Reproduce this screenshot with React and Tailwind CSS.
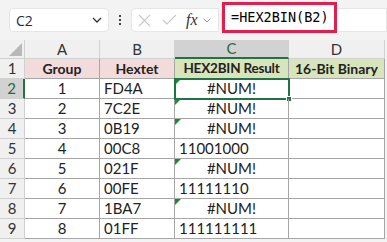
import React from "react";

const rows = [
  { n: 1, g: "1", h: "FD4A", r: "#NUM!", err: true },
  { n: 2, g: "2", h: "7C2E", r: "#NUM!", err: true },
  { n: 3, g: "3", h: "0B19", r: "#NUM!", err: true },
  { n: 4, g: "4", h: "00C8", r: "11001000", err: false },
  { n: 5, g: "5", h: "021F", r: "#NUM!", err: true },
  { n: 6, g: "6", h: "00FE", r: "11111110", err: false },
  { n: 7, g: "7", h: "1BA7", r: "#NUM!", err: true },
  { n: 8, g: "8", h: "01FF", r: "111111111", err: false },
];

const cellFont = { fontFamily: "Lato, 'Open Sans', sans-serif" };

function Triangle() {
  return (
    <svg className="absolute left-0 top-0" width="6" height="6" viewBox="0 0 6 6">
      <polygon points="0,0 6,0 0,6" fill="#1e8a2e" />
    </svg>
  );
}

export default function App() {
  return (
    <div className="w-[387px] h-[242px] overflow-hidden bg-[#f3f3f3] relative" style={{ fontFamily: "'Noto Sans', sans-serif" }}>
      {/* formula bar */}
      <div className="h-[40px] flex items-center pl-[9px] relative">
        <div className="w-[100px] h-[24px] bg-white rounded-[4px] border border-[#e6e6e6] flex items-center justify-between pl-[6px] pr-[6px]">
          <span className="text-[14px] text-[#1f2a44]" style={{ fontFamily: "'Open Sans', sans-serif" }}>C2</span>
          <svg width="10" height="6" viewBox="0 0 10 6"><path d="M1 1 L5 5 L9 1" fill="none" stroke="#333" strokeWidth="1.3" /></svg>
        </div>
        <div className="w-[22px] flex flex-col items-center gap-[2px]">
          <div className="w-[2px] h-[2px] bg-[#444]" />
          <div className="w-[2px] h-[2px] bg-[#444]" />
          <div className="w-[2px] h-[2px] bg-[#444]" />
        </div>
        <div className="h-[24px] flex-1 flex items-center">
          <div className="w-[88px] h-[24px] bg-white rounded-l-[4px] border border-[#e6e6e6] flex items-center pl-[6px]">
            <svg width="13" height="13" viewBox="0 0 13 13"><path d="M1 1 L12 12 M12 1 L1 12" stroke="#c8c8c8" strokeWidth="1.1" /></svg>
            <svg className="ml-[11px]" width="15" height="12" viewBox="0 0 15 12"><path d="M1 6 L5 10 L14 1" fill="none" stroke="#c8c8c8" strokeWidth="1.1" /></svg>
            <span className="ml-[9px] text-[16px] italic text-[#333] leading-none" style={{ fontFamily: "'Liberation Serif', serif" }}>fx</span>
            <svg className="ml-[5px]" width="8" height="5" viewBox="0 0 8 5"><path d="M0.5 0.5 L4 4 L7.5 0.5" fill="none" stroke="#999" strokeWidth="1" /></svg>
          </div>
          <div className="flex-1 h-[24px] bg-white ml-[2px] rounded-l-[4px] border border-[#e6e6e6]" />
        </div>
        <div className="absolute left-[222px] top-[2px] w-[115px] h-[31px] border-[3px] border-[#e01f4d] bg-white flex items-center pl-[6px]">
          <span className="text-[13.5px] text-black" style={{ fontFamily: "'DejaVu Sans Mono', monospace" }}>=HEX2BIN(B2)</span>
        </div>
      </div>

      {/* grid */}
      <div className="grid grid-cols-[25px_75px_75px_114px_96px] grid-rows-[19px_repeat(9,20px)] bg-white w-[385px]" style={cellFont}>
        {/* header row */}
        <div className="bg-[#f0f0f0] border-r border-b border-[#d0d0d0] relative">
          <svg className="absolute right-[2px] bottom-[2px]" width="13" height="13" viewBox="0 0 13 13"><polygon points="13,0 13,13 0,13" fill="#b8b8b8" /></svg>
        </div>
        <div className="bg-[#f0f0f0] border-r border-b border-[#d0d0d0] flex items-center justify-center text-[15px] text-[#333]">A</div>
        <div className="bg-[#f0f0f0] border-r border-b border-[#d0d0d0] flex items-center justify-center text-[15px] text-[#333]">B</div>
        <div className="bg-[#d2d2d2] border-r border-[#d0d0d0] border-b-2 border-b-[#217346] flex items-center justify-center text-[15px] text-[#1e6b3e]">C</div>
        <div className="bg-[#f0f0f0] border-r border-b border-[#d0d0d0] flex items-center justify-center text-[15px] text-[#333]">D</div>

        {/* row 1 */}
        <div className="bg-[#f0f0f0] border-r border-b border-[#d0d0d0] flex items-center justify-center text-[15px] text-[#333]">1</div>
        <div className="bg-[#f2dcdb] border-r border-b border-[#a6a6a6] flex items-center justify-center text-[14px] font-bold text-[#222]">Group</div>
        <div className="bg-[#f2dcdb] border-r border-b border-[#a6a6a6] flex items-center justify-center text-[14px] font-bold text-[#222]">Hextet</div>
        <div className="bg-[#d8e4bc] border-r border-b border-[#a6a6a6] flex items-center justify-center text-[13.5px] tracking-[-0.2px] font-bold text-[#222]">HEX2BIN Result</div>
        <div className="bg-[#d8e4bc] border-r border-b border-[#a6a6a6] flex items-center justify-center text-[14px] font-bold text-[#222]">16-Bit Binary</div>

        {rows.map((r) => {
          const sel = r.n === 1;
          return (
            <React.Fragment key={r.n}>
              <div className={sel
                ? "bg-[#d2d2d2] border-r-2 border-r-[#217346] border-b border-[#d0d0d0] flex items-center justify-center text-[15px] text-[#1e6b3e]"
                : "bg-[#f0f0f0] border-r border-b border-[#d0d0d0] flex items-center justify-center text-[15px] text-[#333]"}>{r.n + 1}</div>
              <div className="border-r border-b border-[#a6a6a6] flex items-center justify-center text-[15px] text-[#222]">{r.g}</div>
              <div className="border-r border-b border-[#a6a6a6] flex items-center pl-[4px] text-[15px] text-[#222]">{r.h}</div>
              <div className={(r.err ? "justify-center " : "pl-[4px] ") + "relative border-r border-b border-[#a6a6a6] flex items-center text-[15px] text-[#222]"}>
                {r.err && <Triangle />}
                {r.r}
                {sel && (
                  <div className="absolute -left-[1px] -top-[1px] w-[116px] h-[22px] border-2 border-[#217346]">
                    <div className="absolute -right-[4px] -bottom-[4px] w-[6px] h-[6px] bg-[#217346] border border-white" />
                  </div>
                )}
              </div>
              <div className="border-r border-b border-[#a6a6a6]" />
            </React.Fragment>
          );
        })}
      </div>
    </div>
  );
}
